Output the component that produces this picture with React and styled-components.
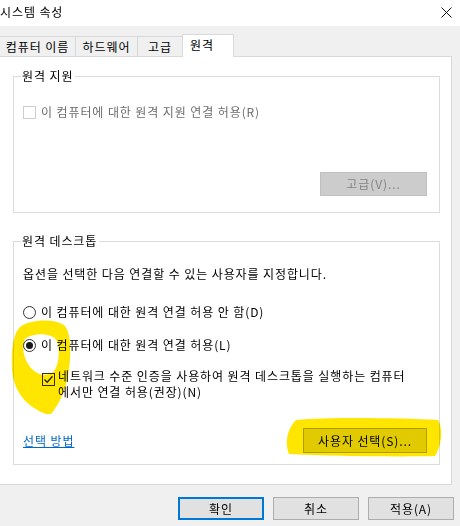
import styled, { createGlobalStyle } from "styled-components";

const GlobalStyle = createGlobalStyle`
  html, body {
    margin: 0;
    padding: 0;
    background: #f0f0f0;
  }
  body {
    font-family: "Noto Sans CJK KR", "Noto Sans", sans-serif;
    font-size: 12px;
    letter-spacing: 0.9px;
    color: #000;
  }
`;

const Window = styled.div`
  position: relative;
  width: 460px;
  height: 526px;
  overflow: hidden;
  background: #f0f0f0;
  display: flex;
  flex-direction: column;
`;

const TitleBar = styled.div`
  height: 26px;
  background: #fff;
  display: flex;
  align-items: center;
  justify-content: space-between;
  padding: 0 8px 2px 0;
  box-sizing: border-box;
  font-size: 12px;
  line-height: 16px;
`;

const TabStrip = styled.div`
  display: flex;
  align-items: flex-end;
  height: 23px;
  margin-top: 8px;
  margin-bottom: -1px;
  position: relative;
  z-index: 1;
`;

const Tab = styled.div`
  box-sizing: border-box;
  width: ${(p) => p.$width}px;
  height: ${(p) => (p.$active ? 23 : 20)}px;
  margin-bottom: ${(p) => (p.$active ? 0 : 1)}px;
  margin-left: -1px;
  border: 1px solid #d9d9d9;
  border-bottom: none;
  background: ${(p) => (p.$active ? "#fff" : "#f0f0f0")};
  display: flex;
  justify-content: ${(p) => (p.$active ? "flex-start" : "center")};
  align-items: ${(p) => (p.$active ? "flex-start" : "center")};
  padding: ${(p) => (p.$active ? "2px 0 0 7px" : "0")};
  line-height: 16px;
  white-space: nowrap;
`;

const Panel = styled.div`
  box-sizing: border-box;
  width: 453px;
  height: 429px;
  margin-left: -1px;
  background: #fff;
  border: 1px solid #d9d9d9;
  padding: 11px 11px 0 13px;
  display: flex;
  flex-direction: column;
  gap: 20px;
`;

const Group = styled.fieldset`
  margin: 0;
  padding: 0 12px 0 9px;
  border: 1px solid #dcdcdc;
  min-width: 0;
  display: flex;
  flex-direction: column;
  align-items: flex-start;
`;

const Legend = styled.legend`
  margin-left: -2px;
  padding: 0 2px 0 1px;
  line-height: 16px;
`;

const Row = styled.div`
  display: flex;
  align-items: flex-start;
  gap: 5px;
  line-height: 16px;
  margin-top: ${(p) => p.$top || 0}px;
  margin-left: ${(p) => p.$indent || 0}px;
  color: ${(p) => (p.$disabled ? "#6d6d6d" : "#000")};
`;

const CheckBox = styled.span`
  flex: none;
  box-sizing: border-box;
  width: 13px;
  height: 13px;
  margin-top: ${(p) => p.$offset || 2}px;
  border: 1px solid ${(p) => (p.$disabled ? "#cccccc" : "#333")};
  background: #fff;
  display: flex;
  align-items: center;
  justify-content: center;
`;

const RadioMark = styled.span`
  flex: none;
  box-sizing: border-box;
  width: 13px;
  height: 13px;
  margin-top: 2px;
  border: 1px solid #333;
  border-radius: 50%;
  background: #fff;
  display: flex;
  align-items: center;
  justify-content: center;
  &::after {
    content: "";
    width: 7px;
    height: 7px;
    border-radius: 50%;
    background: ${(p) => (p.$checked ? "#1a1a1a" : "transparent")};
  }
`;

const Text = styled.p`
  margin: ${(p) => p.$top || 0}px 0 0;
  line-height: 16px;
`;

const Button = styled.button`
  box-sizing: border-box;
  width: ${(p) => p.$width}px;
  height: ${(p) => p.$height || 23}px;
  font-family: inherit;
  font-size: 12px;
  letter-spacing: 0.9px;
  line-height: 16px;
  padding: 0;
  color: ${(p) => (p.$disabled ? "#838383" : "#000")};
  background: ${(p) => (p.$disabled ? "#cccccc" : "#e1e1e1")};
  border: ${(p) =>
    p.$primary ? "2px solid #0078d7" : p.$disabled ? "1px solid #bfbfbf" : "1px solid #adadad"};
`;

const ButtonRow = styled.div`
  align-self: stretch;
  display: flex;
  justify-content: ${(p) => p.$justify || "flex-end"};
  align-items: center;
  margin-top: ${(p) => p.$top || 0}px;
  margin-bottom: ${(p) => p.$bottom || 0}px;
`;

const LinkText = styled.a`
  color: #0066cc;
  text-decoration: underline;
  line-height: 16px;
  cursor: pointer;
`;

const Footer = styled.div`
  display: flex;
  justify-content: flex-end;
  gap: 9px;
  padding: 12px 6px 0 0;
`;

const Highlight = styled.svg`
  position: absolute;
  left: 0;
  top: 0;
  pointer-events: none;
  mix-blend-mode: multiply;
`;

export default function App() {
  return (
    <Window>
      <GlobalStyle />
      <TitleBar>
        <span>시스템 속성</span>
        <svg width="11" height="11" viewBox="0 0 11 11">
          <path d="M0.5 0.5 L10.5 10.5 M10.5 0.5 L0.5 10.5" stroke="#111" strokeWidth="1" />
        </svg>
      </TitleBar>

      <TabStrip>
        <Tab $width={77}>컴퓨터 이름</Tab>
        <Tab $width={63}>하드웨어</Tab>
        <Tab $width={46}>고급</Tab>
        <Tab $width={52} $active>원격</Tab>
      </TabStrip>

      <Panel>
        <Group style={{ height: 143 }}>
          <Legend>원격 지원</Legend>
          <Row $top={20} $disabled>
            <CheckBox $disabled />
            <span>이 컴퓨터에 대한 원격 지원 연결 허용(R)</span>
          </Row>
          <ButtonRow $top={52}>
            <Button $width={107} $height={24} $disabled>
              고급(V)...
            </Button>
          </ButtonRow>
        </Group>

        <Group>
          <Legend>원격 데스크톱</Legend>
          <Text $top={17}>옵션을 선택한 다음 연결할 수 있는 사용자를 지정합니다.</Text>
          <Row $top={22}>
            <RadioMark />
            <span>이 컴퓨터에 대한 원격 연결 허용 안 함(D)</span>
          </Row>
          <Row $top={17}>
            <RadioMark $checked />
            <span>이 컴퓨터에 대한 원격 연결 허용(L)</span>
          </Row>
          <Row $top={15} $indent={19} style={{ gap: 3 }}>
            <CheckBox $offset={5}>
              <svg width="11" height="11" viewBox="0 0 11 11">
                <path d="M1.5 5.5 L4.2 8.3 L9.5 2.3" fill="none" stroke="#222" strokeWidth="1.3" />
              </svg>
            </CheckBox>
            <span>
              네트워크 수준 인증을 사용하여 원격 데스크톱을 실행하는 컴퓨터
              <br />
              에서만 연결 허용(권장)(N)
            </span>
          </Row>
          <ButtonRow $justify="space-between" $top={28} $bottom={11}>
            <LinkText>선택 방법</LinkText>
            <Button $width={124} $height={25}>
              사용자 선택(S)...
            </Button>
          </ButtonRow>
        </Group>
      </Panel>

      <Footer>
        <Button $width={86} $primary>
          확인
        </Button>
        <Button $width={86}>취소</Button>
        <Button $width={86}>적용(A)</Button>
      </Footer>

      <Highlight width="460" height="526" viewBox="0 0 460 526">
        <path
          fillRule="evenodd"
          fill="#ffe600"
          d="M20 327 C30 319 56 318 65 326 C73 336 71 368 65 388 C61 400 56 408 51 414 L46 414 C30 408 14 395 12 370 C11 350 13 334 20 327 Z
             M25 339 C34 332 53 333 57 341 C60 352 59 364 54 371 C48 377 38 376 31 368 C24 360 21 347 25 339 Z"
        />
        <path
          fill="#ffe600"
          d="M296 420 C330 417 400 418 438 420 C443 428 442 445 435 456 C400 457 330 456 289 454 C285 445 286 430 296 420 Z"
        />
      </Highlight>
    </Window>
  );
}
